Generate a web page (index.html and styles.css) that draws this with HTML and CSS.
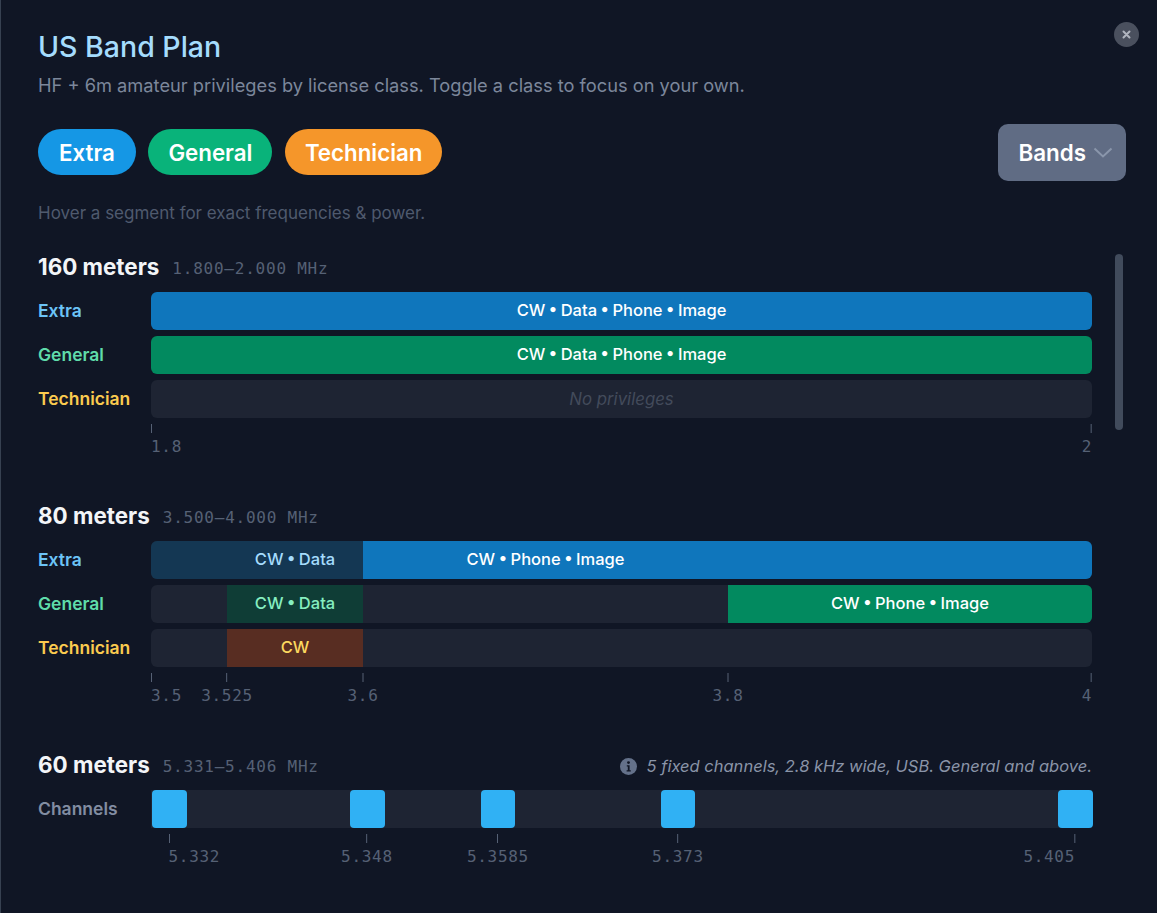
FILE: index.html
```html
<!DOCTYPE html>
<html lang="en">

<head>
  <meta charset="UTF-8" />
  <meta name="viewport" content="width=device-width, initial-scale=1.0" />
  <title>US Band Plan</title>
  <link rel="stylesheet" href="styles.css">
</head>

<body>
  <div class="modal">
    <button class="close" aria-label="Close">
      <svg width="11" height="11" viewBox="0 0 11 11"><path d="M2.5 2.5l6 6M8.5 2.5l-6 6" /></svg>
    </button>

    <h1 class="title">US Band Plan</h1>
    <p class="subtitle">HF + 6m amateur privileges by license class. Toggle a class to focus on your own.</p>

    <div class="toolbar">
      <button class="chip chip-extra">Extra</button>
      <button class="chip chip-general">General</button>
      <button class="chip chip-tech">Technician</button>
      <button class="bands">Bands
        <svg width="20" height="11" viewBox="0 0 20 11"><path d="M1.5 1.5l8.5 8 8.5-8" /></svg>
      </button>
    </div>

    <p class="hint">Hover a segment for exact frequencies &amp; power.</p>

    <div class="scroll-area">
      <div class="thumb"></div>

      <section class="band">
        <div class="band-head">
          <h2>160 meters</h2>
          <span class="range">1.800–2.000 MHz</span>
        </div>
        <div class="row">
          <span class="label label-extra">Extra</span>
          <div class="track"><div class="seg seg-extra" style="width:100%">CW • Data • Phone • Image</div></div>
        </div>
        <div class="row">
          <span class="label label-general">General</span>
          <div class="track"><div class="seg seg-general" style="width:100%">CW • Data • Phone • Image</div></div>
        </div>
        <div class="row">
          <span class="label label-tech">Technician</span>
          <div class="track"><div class="seg seg-none" style="width:100%">No privileges</div></div>
        </div>
        <div class="axis">
          <div class="mark mark-start" style="left:0%"><i></i><span>1.8</span></div>
          <div class="mark mark-end" style="left:100%"><i></i><span>2</span></div>
        </div>
      </section>

      <section class="band">
        <div class="band-head">
          <h2>80 meters</h2>
          <span class="range">3.500–4.000 MHz</span>
        </div>
        <div class="row">
          <span class="label label-extra">Extra</span>
          <div class="track">
            <div class="seg seg-extra-dim" style="width:8.08%"></div>
            <div class="seg seg-extra-dim" style="width:14.45%">CW • Data</div>
            <div class="seg seg-extra" style="width:38.79%">CW • Phone • Image</div>
            <div class="seg seg-extra" style="width:38.68%"></div>
          </div>
        </div>
        <div class="row">
          <span class="label label-general">General</span>
          <div class="track">
            <div class="seg" style="width:8.08%"></div>
            <div class="seg seg-general-dim" style="width:14.45%">CW • Data</div>
            <div class="seg" style="width:38.79%"></div>
            <div class="seg seg-general" style="width:38.68%">CW • Phone • Image</div>
          </div>
        </div>
        <div class="row">
          <span class="label label-tech">Technician</span>
          <div class="track">
            <div class="seg" style="width:8.08%"></div>
            <div class="seg seg-tech-dim" style="width:14.45%">CW</div>
          </div>
        </div>
        <div class="axis">
          <div class="mark mark-start" style="left:0%"><i></i><span>3.5</span></div>
          <div class="mark" style="left:8.08%"><i></i><span>3.525</span></div>
          <div class="mark" style="left:22.53%"><i></i><span>3.6</span></div>
          <div class="mark" style="left:61.32%"><i></i><span>3.8</span></div>
          <div class="mark mark-end" style="left:100%"><i></i><span>4</span></div>
        </div>
      </section>

      <section class="band">
        <div class="band-head">
          <h2>60 meters</h2>
          <span class="range">5.331–5.406 MHz</span>
          <span class="note">
            <svg width="17" height="17" viewBox="0 0 17 17"><circle cx="8.5" cy="8.5" r="8.5" fill="#64718a" /><circle cx="8.5" cy="4.6" r="1.4" fill="#101625" /><path d="M6.8 7.2h2.8v5h1.2v1.3H6.6v-1.3h1.2V8.5h-1z" fill="#101625" /></svg>
            <em>5 fixed channels, 2.8 kHz wide, USB. General and above.</em>
          </span>
        </div>
        <div class="row">
          <span class="label label-channels">Channels</span>
          <div class="track track-channels">
            <div class="channel" style="left:0.1%;width:3.72%"></div>
            <div class="channel" style="left:21.15%;width:3.72%"></div>
            <div class="channel" style="left:35.07%;width:3.61%"></div>
            <div class="channel" style="left:54.2%;width:3.61%"></div>
            <div class="channel" style="left:96.4%;width:3.72%"></div>
          </div>
        </div>
        <div class="axis">
          <div class="mark mark-start" style="left:1.86%"><i></i><span>5.332</span></div>
          <div class="mark" style="left:22.95%"><i></i><span>5.348</span></div>
          <div class="mark" style="left:36.87%"><i></i><span>5.3585</span></div>
          <div class="mark" style="left:56%"><i></i><span>5.373</span></div>
          <div class="mark mark-end" style="left:98.2%"><i></i><span>5.405</span></div>
        </div>
      </section>
    </div>
  </div>
</body>

</html>
```

FILE: styles.css
```css
* {
  box-sizing: border-box;
}

html,
body {
  margin: 0;
  height: 100%;
  overflow: hidden;
  background: #101625;
}

body {
  font-family: "Inter", "Liberation Sans", sans-serif;
  color: #fff;
}

button {
  border: 0;
  font: inherit;
  color: #fff;
}

.modal {
  position: relative;
  height: 913px;
  padding: 29px 31px 0 37px;
  border-left: 1px solid #374151;
  overflow: hidden;
}

.close {
  position: absolute;
  top: 22px;
  right: 18px;
  width: 25px;
  height: 25px;
  padding: 0;
  display: flex;
  align-items: center;
  justify-content: center;
  border-radius: 50%;
  background: #4a505e;
}

.close svg path {
  fill: none;
  stroke: #b0b5bf;
  stroke-width: 2;
  stroke-linecap: round;
}

.title {
  margin: 0;
  font-size: 28.5px;
  font-weight: 500;
  line-height: 36px;
  color: #a5dcfd;
}

.subtitle {
  margin: 7px 0 0;
  font-size: 18.25px;
  line-height: 26px;
  color: #7c879b;
}

.toolbar {
  display: flex;
  align-items: center;
  gap: 12.5px;
  margin-top: 26px;
}

.chip {
  height: 46px;
  margin-bottom: 1px;
  padding: 0 20px;
  border-radius: 23px;
  font-size: 22.3px;
  font-weight: 600;
}

.chip-extra {
  padding: 0 21px;
  background: #1597e5;
}

.chip-general {
  background: #09b37a;
}

.chip-tech {
  background: #f5962a;
}

.bands {
  display: flex;
  align-items: center;
  gap: 7px;
  height: 57px;
  margin-left: auto;
  padding: 0 13px 0 20px;
  border-radius: 10px;
  background: #606c84;
  font-size: 22.4px;
  font-weight: 600;
}

.bands svg path {
  fill: none;
  stroke: #8a96ab;
  stroke-width: 2;
}

.hint {
  margin: 21px 0 0;
  font-size: 17px;
  line-height: 22px;
  color: #4f5a6e;
}

.scroll-area {
  position: relative;
  padding-top: 29px;
  padding-right: 34px;
}

.thumb {
  position: absolute;
  top: 30px;
  right: 3px;
  width: 8px;
  height: 176px;
  border-radius: 4px;
  background: #414b5c;
}

.band {
  margin-bottom: 46px;
}

.band-head {
  display: flex;
  align-items: center;
  gap: 13px;
  height: 28px;
  margin-bottom: 11px;
}

.band-head h2 {
  margin: 0;
  padding-bottom: 2px;
  font-size: 22.4px;
  font-weight: 700;
  color: #f3f5f8;
}

.range {
  padding-top: 2px;
  font-family: "DejaVu Sans Mono", monospace;
  font-size: 16px;
  letter-spacing: 0.77px;
  color: #566175;
}

.note {
  display: flex;
  align-items: center;
  gap: 10px;
  margin-left: auto;
  padding-top: 2px;
  font-size: 16.5px;
  color: #8a94a8;
}

.row {
  display: grid;
  grid-template-columns: 113px 1fr;
  align-items: center;
  margin-bottom: 6px;
}

.label {
  padding-bottom: 2px;
  font-size: 17.5px;
  font-weight: 600;
}

.label-extra {
  color: #6cc4f7;
}

.label-general {
  color: #5fdcaa;
}

.label-tech {
  color: #fbcb4f;
}

.label-channels {
  color: #828da2;
}

.track {
  display: flex;
  height: 38px;
  border-radius: 6px;
  overflow: hidden;
  background: #1e2433;
}

.seg {
  display: flex;
  align-items: center;
  justify-content: center;
  padding-bottom: 2px;
  font-size: 16.5px;
  font-weight: 500;
  word-spacing: -1.1px;
}

.seg-extra {
  background: #0f76bc;
}

.seg-general {
  background: #028a5f;
}

.seg-extra-dim {
  background: #143753;
  color: #a5dcfd;
}

.seg-general-dim {
  background: #0f3d36;
  color: #86eec0;
}

.seg-tech-dim {
  background: #582d22;
  color: #fcd95f;
}

.seg-none {
  padding-bottom: 0;
  font-size: 16.8px;
  font-style: italic;
  font-weight: 400;
  word-spacing: 0;
  color: #434b5b;
}

.track-channels {
  position: relative;
  border-radius: 0;
  overflow: visible;
}

.channel {
  position: absolute;
  top: 0;
  bottom: 0;
  border-radius: 4px;
  background: #30b1f4;
}

.axis {
  position: relative;
  height: 32px;
  margin-left: 113px;
}

.mark {
  position: absolute;
  top: 0;
  display: flex;
  flex-direction: column;
  align-items: center;
  transform: translateX(-50%);
}

.mark i {
  display: block;
  width: 1px;
  height: 9px;
  background: #566175;
}

.mark span {
  margin-top: 4px;
  font-family: "DejaVu Sans Mono", monospace;
  font-size: 16px;
  line-height: 20px;
  letter-spacing: 0.7px;
  color: #566175;
}

.mark-start {
  align-items: flex-start;
  transform: none;
}

.mark-end {
  align-items: flex-end;
  transform: translateX(-100%);
}
```
